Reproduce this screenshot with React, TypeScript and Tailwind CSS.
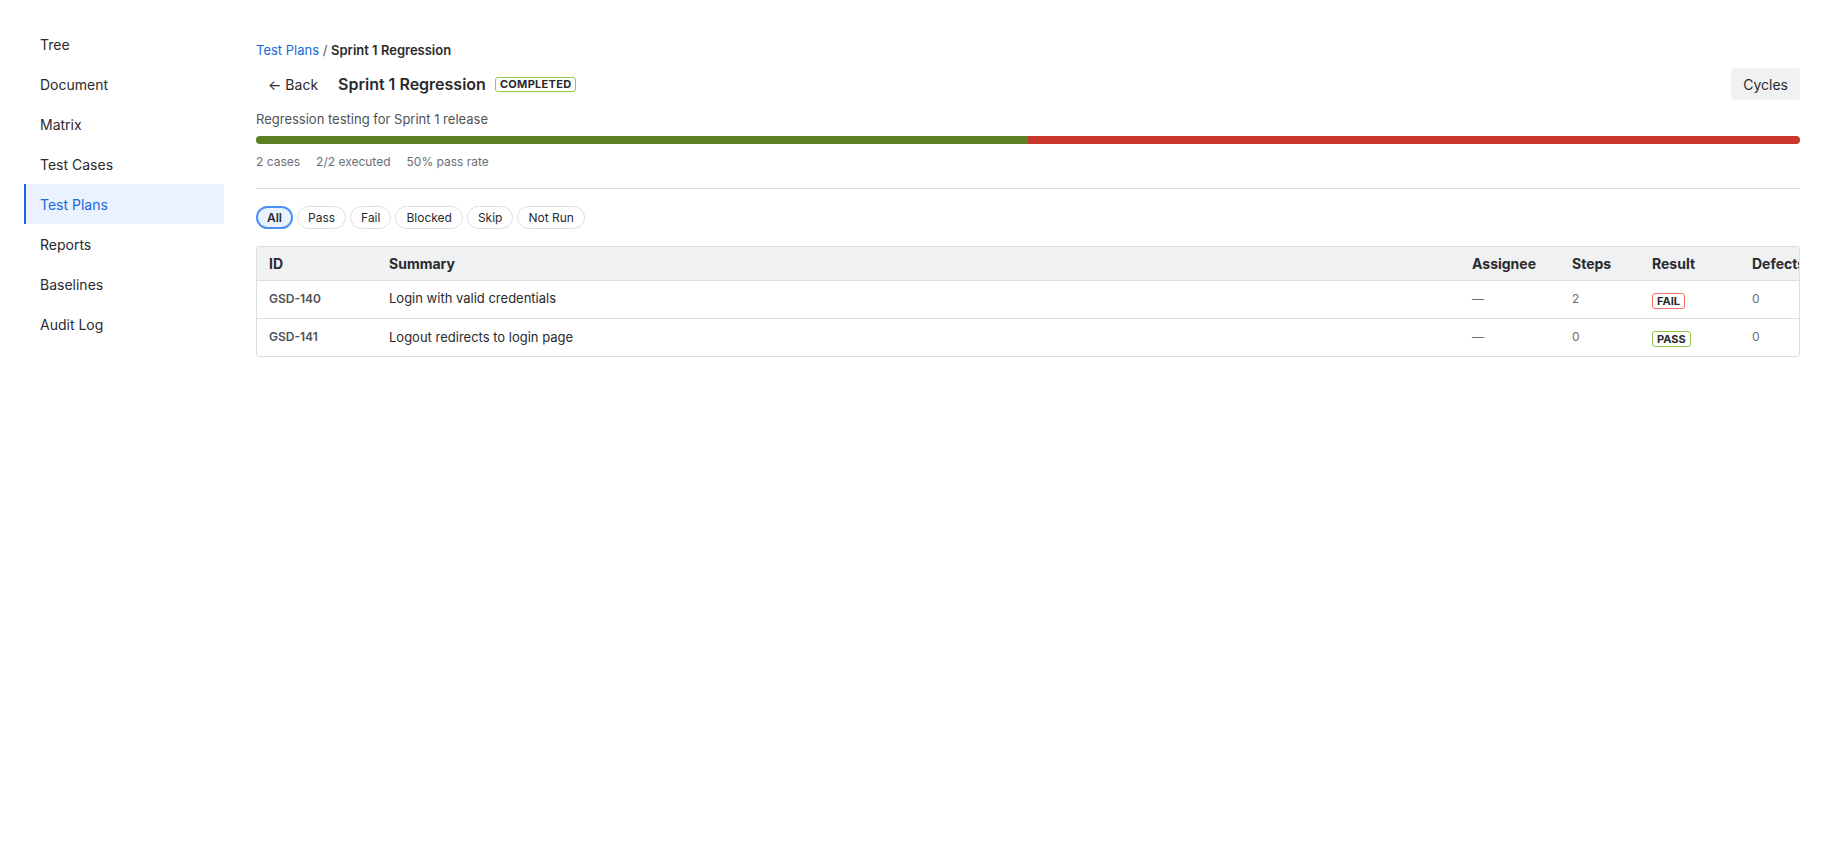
import React, { useState } from 'react';

const navItems = ['Tree', 'Document', 'Matrix', 'Test Cases', 'Test Plans', 'Reports', 'Baselines', 'Audit Log'];
const filters = ['All', 'Pass', 'Fail', 'Blocked', 'Skip', 'Not Run'];

const rows = [
  { id: 'GSD-140', summary: 'Login with valid credentials', assignee: '—', steps: 2, result: 'FAIL', defects: 0 },
  { id: 'GSD-141', summary: 'Logout redirects to login page', assignee: '—', steps: 0, result: 'PASS', defects: 0 },
];

const ResultBadge: React.FC<{ result: string }> = ({ result }) => (
  <span
    className={
      result === 'FAIL'
        ? 'inline-block rounded-[3px] border border-[#f87168] px-[4px] text-[11px] leading-[14px] font-bold text-[#292a2e]'
        : 'inline-block rounded-[3px] border border-[#94c748] px-[4px] text-[11px] leading-[14px] font-bold text-[#292a2e]'
    }
  >
    {result}
  </span>
);

const App: React.FC = () => {
  const [active, setActive] = useState('All');

  return (
    <div className="flex min-h-screen bg-white text-[#292a2e]" style={{ fontFamily: 'Inter, "Noto Sans", sans-serif' }}>
      <nav className="w-[224px] shrink-0 pl-6 pt-6">
        {navItems.map(item => (
          <div
            key={item}
            className={
              item === 'Test Plans'
                ? 'flex h-10 items-center border-l-2 border-[#1868db] bg-[#e9f2fe] pl-[14px] text-[14px] text-[#1868db]'
                : 'flex h-10 items-center border-l-2 border-transparent pl-[14px] text-[14px] text-[#292a2e]'
            }
          >
            {item}
          </div>
        ))}
      </nav>

      <main className="min-w-0 flex-1 pl-8 pr-10 pt-10">
        <div className="text-[13px] leading-5">
          <span className="text-[#1868db]">Test Plans</span>
          <span className="text-[#505258]"> / </span>
          <span className="font-semibold">Sprint 1 Regression</span>
        </div>

        <div className="mt-2 flex h-8 items-center justify-between">
          <div className="flex items-center">
            <button className="flex h-8 items-center gap-1 rounded px-3 text-[14px]">
              <span className="text-[14px]">←</span>
              <span>Back</span>
            </button>
            <h1 className="ml-2 text-[16px] font-semibold">Sprint 1 Regression</h1>
            <span className="ml-[9px] rounded-[3px] border border-[#94c748] px-[4px] text-[11px] leading-[13px] font-bold tracking-[0.3px]">
              COMPLETED
            </span>
          </div>
          <button className="h-8 rounded bg-[#f0f1f2] px-3 text-[14px]">Cycles</button>
        </div>

        <p className="mt-[9px] text-[13px] leading-5 text-[#505258]">Regression testing for Sprint 1 release</p>

        <div className="mt-[7px] flex h-2 overflow-hidden rounded-full bg-[#dddee1]">
          <div className="h-full bg-[#5b7f24]" style={{ width: '50%' }} />
          <div className="h-full bg-[#c9372c]" style={{ width: '50%' }} />
        </div>

        <div className="mt-2 flex gap-4 text-[12px] leading-5 text-[#6b6e76]">
          <span>2 cases</span>
          <span>2/2 executed</span>
          <span>50% pass rate</span>
        </div>

        <div className="mt-4 border-t border-[#dddee1]" />

        <div className="mt-[17px] flex gap-[4px]">
          {filters.map(f => (
            <button
              key={f}
              onClick={() => setActive(f)}
              className={
                active === f
                  ? 'h-[23px] rounded-full border-2 border-[#4c8ff5] bg-[#e9f2fe] px-[9px] text-[12px] font-semibold'
                  : 'h-[23px] rounded-full border border-[#dddee1] bg-white px-[10px] text-[12px]'
              }
            >
              {f}
            </button>
          ))}
        </div>

        <div className="mt-[17px] overflow-hidden rounded-[3px] border border-[#dddee1]">
          <table className="w-[1583px] table-fixed border-collapse text-left">
            <colgroup>
              <col className="w-[120px]" />
              <col className="w-[1083px]" />
              <col className="w-[100px]" />
              <col className="w-[80px]" />
              <col className="w-[100px]" />
              <col className="w-[100px]" />
            </colgroup>
            <thead>
              <tr className="h-[33px] bg-[#f0f1f2] text-[14px]">
                <th className="border-b border-[#dddee1] px-3 font-bold">ID</th>
                <th className="border-b border-[#dddee1] px-3 font-bold">Summary</th>
                <th className="border-b border-[#dddee1] px-3 font-bold">Assignee</th>
                <th className="border-b border-[#dddee1] px-3 font-bold">Steps</th>
                <th className="border-b border-[#dddee1] px-3 font-bold">Result</th>
                <th className="border-b border-[#dddee1] px-3 font-bold whitespace-nowrap">Defects</th>
              </tr>
            </thead>
            <tbody>
              {rows.map((r, i) => (
                <tr key={r.id} className={i < rows.length - 1 ? 'h-[38px] border-b border-[#dddee1]' : 'h-[38px]'}>
                  <td className="px-3 text-[12px] font-semibold text-[#505258]">{r.id}</td>
                  <td className="px-3 text-[13px]">{r.summary}</td>
                  <td className="px-3 text-[12px] text-[#6b6e76]">{r.assignee}</td>
                  <td className="px-3 text-[12px] text-[#6b6e76]">{r.steps}</td>
                  <td className="px-3">
                    <ResultBadge result={r.result} />
                  </td>
                  <td className="px-3 text-[12px] text-[#6b6e76]">{r.defects}</td>
                </tr>
              ))}
            </tbody>
          </table>
        </div>
      </main>
    </div>
  );
};

export default App;
